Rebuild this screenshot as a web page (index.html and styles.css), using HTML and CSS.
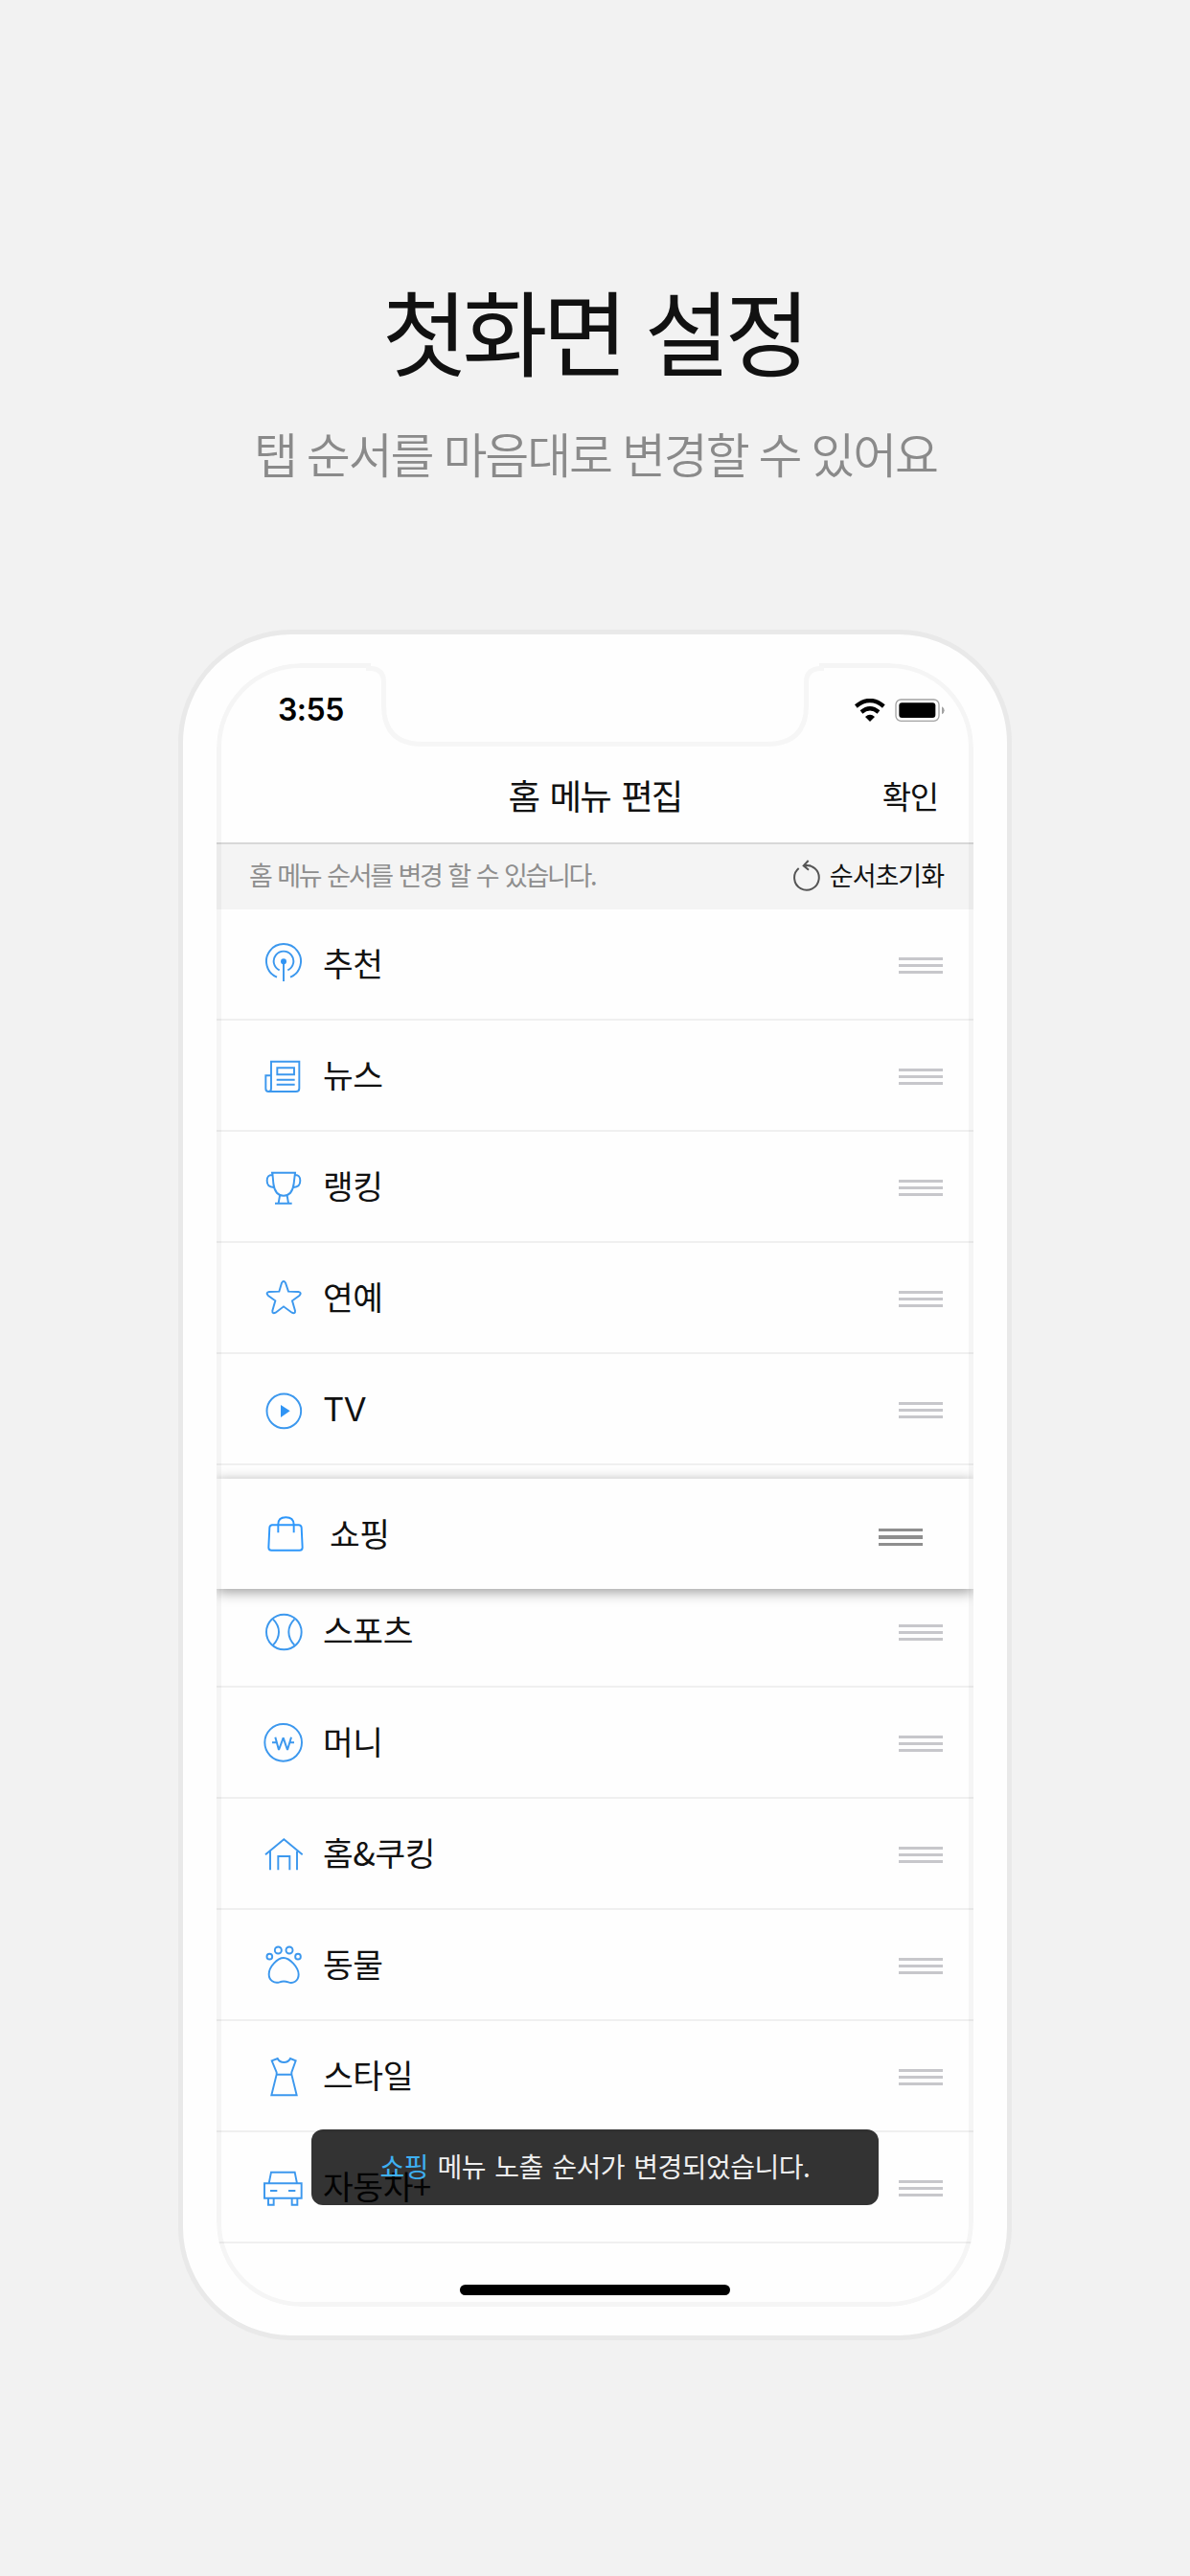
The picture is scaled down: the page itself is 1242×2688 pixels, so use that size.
FILE: index.html
```html
<!DOCTYPE html>
<html lang="ko">
<head>
<meta charset="utf-8">
<title>첫화면 설정</title>
<link rel="stylesheet" href="styles.css">
</head>
<body>
<main class="page">
  <h1 class="headline">첫화면 설정</h1>
  <p class="subhead">탭 순서를 마음대로 변경할 수 있어요</p>

  <section class="phone">
    <div class="screen">
      <div class="status">
        <span class="clock">3:55</span>
        <span class="status-icons">
          <svg class="wifi" viewBox="815 264 96 72">
            <path d="M819 288Q863 252 906 288M836 306Q863 284 890 306" fill="none" stroke="#000" stroke-width="13"/>
            <path d="M848 321Q863 307 878 321L863 336Z"/>
          </svg>
          <svg class="battery" viewBox="942 264 156 72">
            <rect x="945" y="267" width="135" height="67" rx="16" fill="none" stroke="#a2a2a2" stroke-width="4"/>
            <rect x="955" y="277" width="114" height="47" rx="9"/>
            <path d="M1089 289Q1097 293 1097 301T1089 313Z" fill="#a2a2a2"/>
          </svg>
        </span>
      </div>
      <header class="nav">
        <h2 class="nav-title">홈 메뉴 편집</h2>
        <span class="nav-done">확인</span>
      </header>
      <div class="guide">
        <span class="guide-text">홈 메뉴 순서를 변경 할 수 있습니다.</span>
        <span class="reset">
          <svg class="reset-icon" viewBox="621 771 87 99" fill="none" stroke="#555" stroke-width="6">
            <path d="M638 798A38.500 38.500 0 1 0 654 790L676 790M668 774L653 790L669 803"/>
          </svg>
          <span class="reset-text">순서초기화</span>
        </span>
      </div>

      <ul class="menu">
        <li class="row">
          <svg class="icon" viewBox="162 132 132 132">
            <path d="M207 239A54 54 0 1 1 249 239M215 217A31 31 0 1 1 241 217M228 190V252"/>
            <circle class="solid" cx="228" cy="190" r="9"/>
          </svg>
          <span class="label">추천</span><i class="grip"></i>
        </li>
        <li class="row">
          <svg class="icon" viewBox="162 480 132 132">
            <path d="M189 547V503H277V587Q277 597 267 597H181Q172 597 172 587V547H189V587Q189 597 181 597M208 523H261V544H208ZM206 560H263M206 575H263"/>
          </svg>
          <span class="label">뉴스</span><i class="grip"></i>
        </li>
        <li class="row">
          <svg class="icon" viewBox="162 138 132 132">
            <path d="M189 161H267M193 161L196 195Q201 233 228 233T260 195L264 161M193 168Q176 167 176 186Q176 206 197 207M263 168Q280 167 280 186Q280 206 259 207M216 233L212 256M239 233L243 256M201 257H254"/>
          </svg>
          <span class="label">랭킹</span><i class="grip"></i>
        </li>
        <li class="row">
          <svg class="icon" viewBox="162 486 132 132">
            <path d="M222 506Q228 496 234 506L243 533L274 534Q286 536 278 545L255 562L264 593Q265 604 254 599L228 580L203 599Q192 604 193 593L202 562L179 545Q171 536 183 534L214 533Z"/>
          </svg>
          <span class="label">연예</span><i class="grip"></i>
        </li>
        <li class="row">
          <svg class="icon" viewBox="162 834 132 132">
            <circle cx="229" cy="907" r="53.500"/>
            <path class="solid" d="M219 888L248 907L219 927Z"/>
          </svg>
          <span class="label latin">TV</span><i class="grip"></i>
        </li>
        <li class="slot">
          <div class="row lifted">
            <svg class="icon" viewBox="162 235.500 132 132">
              <path d="M190 272H275Q283 272 284 280L287 343Q287 352 278 352H190Q181 352 181 343L184 280Q185 272 193 272M211 296V270Q211 248 235 248T260 270V296"/>
            </svg>
            <span class="label">쇼핑</span><i class="grip"></i>
          </div>
        </li>
        <li class="row">
          <svg class="icon" viewBox="162 540 132 132">
            <circle cx="229" cy="609" r="55"/>
            <path d="M195 569Q213 587 213 609T195 650M262 569Q244 587 244 609T262 650"/>
          </svg>
          <span class="label">스포츠</span><i class="grip"></i>
        </li>
        <li class="row">
          <svg class="icon" viewBox="162 888 132 132">
            <circle cx="227" cy="955" r="58"/>
            <path class="won" d="M202 938L213 978L227 940L240 978L252 938M192 955H208M246 955H261"/>
          </svg>
          <span class="label">머니</span><i class="grip"></i>
        </li>
        <li class="row">
          <svg class="icon" viewBox="162 216 132 132">
            <path d="M171 286L229 238L287 286M186 275V334M270 275V334M211 334V291H247V334"/>
          </svg>
          <span class="label">홈&amp;쿠킹</span><i class="grip"></i>
        </li>
        <li class="row">
          <svg class="icon" viewBox="162 564 132 132">
            <circle cx="211" cy="585" r="10.500"/><circle cx="246" cy="585" r="10.500"/>
            <circle cx="184" cy="605" r="8.500"/><circle cx="273" cy="605" r="8.500"/>
            <path d="M228 609C247 609 275 639 275 661C275 683 256 690 243 685Q228 680 215 685C199 690 182 680 182 660C182 637 209 609 228 609Z"/>
          </svg>
          <span class="label">동물</span><i class="grip"></i>
        </li>
        <li class="row">
          <svg class="icon" viewBox="162 912 132 132">
            <path d="M191 931L209 924Q215 936 229 936T249 924L266 931L253 967V974L269 1039H190L206 974V967ZM206 974H253"/>
          </svg>
          <span class="label">스타일</span><i class="grip"></i>
        </li>
        <li class="row">
          <svg class="icon" viewBox="282 240 132 132">
            <path d="M302 295L309 260H383L390 295M288 295H404V341H288ZM306 318H328M363 318H385M300 341V362H317V341M374 341V362H391V341"/>
          </svg>
          <span class="label">자동차+</span><i class="grip"></i>
        </li>
      </ul>

      <div class="toast"><p class="toast-text"><b class="toast-name">쇼핑</b> 메뉴 노출 순서가 변경되었습니다.</p></div>
      <div class="home-bar"></div>
      <svg class="notch" viewBox="382 692 480 88">
        <rect x="387" y="690" width="468" height="9" fill="#fefefe"/>
        <path d="M382 697.500H386Q400.500 697.500 400.500 712V736Q400.500 776.500 441 776.500H800Q841.500 776.500 841.500 736V712Q841.500 697.500 857 697.500H860" fill="#fefefe" stroke="#f6f6f6" stroke-width="5"/>
      </svg>
    </div>
  </section>
</main>
</body>
</html>
```
FILE: styles.css
```css
* { box-sizing: border-box; margin: 0; padding: 0; }

body {
  background: #f2f2f2;
  color: #111;
  font-family: "Noto Sans CJK KR", sans-serif;
}

.page {
  display: flex;
  flex-direction: column;
  align-items: center;
  height: 2688px;
  padding-top: 283px;
}

.headline {
  padding-right: 3px;
  font-size: 97px;
  font-weight: 400;
  line-height: 120px;
  letter-spacing: -5.6px;
  word-spacing: 1.5px;
}

.subhead {
  margin-top: 34px;
  padding-left: 1px;
  color: #8a8a8a;
  font-family: "Noto Sans CJK KR DemiLight", "Noto Sans CJK KR", sans-serif;
  font-size: 50px;
  font-weight: 350;
  line-height: 70px;
  letter-spacing: -2.1px;
  word-spacing: -1px;
}

.phone {
  width: 870px;
  height: 1785px;
  margin-top: 150px;
  padding: 30px 35px;
  background: #fefefe;
  border: 5px solid #e9e9e9;
  border-radius: 118px;
}

.screen {
  position: relative;
  width: 790px;
  height: 1715px;
  overflow: hidden;
  border-radius: 88px;
}

.screen::after {
  content: "";
  position: absolute;
  inset: 0;
  z-index: 2;
  border: 5px solid rgba(0, 0, 0, 0.035);
  border-radius: 88px;
}

.status {
  display: flex;
  justify-content: space-between;
  align-items: center;
  height: 85px;
  padding: 12px 30px 0 64px;
}

.clock {
  color: #000;
  font: 600 32px "Inter", sans-serif;
  letter-spacing: -0.5px;
}

.status-icons { display: flex; gap: 10px; }
.wifi { width: 32px; height: 24px; }
.battery { width: 52px; height: 24px; }

.nav {
  display: grid;
  grid-template-columns: 1fr auto 1fr;
  align-items: center;
  height: 104px;
  padding: 3px 37px 0;
  border-bottom: 2px solid #d8d8d8;
}

.nav-title {
  grid-column: 2;
  font-size: 36.5px;
  font-weight: 400;
  line-height: 50px;
  letter-spacing: -1.9px;
  word-spacing: 3px;
}

.nav-done {
  justify-self: end;
  font-size: 33px;
  line-height: 50px;
  letter-spacing: -1.2px;
}

.guide {
  display: flex;
  justify-content: space-between;
  align-items: center;
  height: 68px;
  padding: 0 31px 4px 34px;
  background: #f4f4f4;
  font-size: 27px;
  line-height: 40px;
}

.guide-text {
  color: #8e8e8e;
  letter-spacing: -2.3px;
  word-spacing: 1.5px;
}

.reset { display: flex; align-items: center; gap: 9px; }
.reset-icon { width: 29px; height: 33px; }
.reset-text { letter-spacing: -1px; }

.menu { list-style: none; }

.row {
  display: flex;
  align-items: center;
  height: 116px;
  padding: 0 32px 0 48px;
  background: #fefefe;
  border-bottom: 2px solid #f0f0f0;
}

.icon {
  width: 44px;
  height: 44px;
  fill: none;
  stroke: #3c98ee;
  stroke-width: 5.8;
}

.icon .solid { fill: #3094f4; stroke: none; }
.icon .won { stroke-width: 6; stroke-linejoin: bevel; }

.label {
  flex: 1;
  margin: -4px 0 0 19px;
  font-size: 34.5px;
  line-height: 50px;
  letter-spacing: -0.4px;
}

.label.latin { margin-top: 2px; font-family: "Inter", sans-serif; }

.grip {
  width: 46px;
  height: 17px;
  margin-top: 2px;
  background: linear-gradient(#c7c7cb 3px, transparent 3px 7px, #c7c7cb 7px 10px, transparent 10px 14px, #c7c7cb 14px);
}

.slot { position: relative; height: 116px; }

.lifted {
  position: absolute;
  top: 14px;
  left: 0;
  z-index: 1;
  width: 790px;
  height: 115px;
  padding-right: 53px;
  border: 0;
  box-shadow: 0 3px 13px rgba(0, 0, 0, 0.4);
}

.lifted .icon { stroke: #2e97fa; }
.lifted .label { margin-left: 26px; }

.lifted .grip {
  height: 18px;
  margin-top: 6px;
  background: linear-gradient(#8e8e8e 3px, transparent 3px 7px, #8e8e8e 7px 11px, transparent 11px 15px, #8e8e8e 15px);
}

.toast {
  position: absolute;
  top: 1530px;
  left: 99px;
  z-index: 2;
  display: flex;
  justify-content: center;
  align-items: center;
  width: 592px;
  height: 79px;
  padding-bottom: 3px;
  background: rgba(0, 0, 0, 0.8);
  border-radius: 12px;
}

.toast-text {
  color: #eee;
  font-size: 28px;
  line-height: 40px;
  letter-spacing: -0.5px;
  word-spacing: 2px;
}

.toast-name { color: #3eb0f2; font-weight: 400; }

.home-bar {
  position: absolute;
  bottom: 12px;
  left: 254px;
  width: 282px;
  height: 11px;
  background: #000;
  border-radius: 6px;
}

.notch {
  position: absolute;
  top: 0;
  left: 156px;
  z-index: 3;
  width: 480px;
  height: 88px;
}
```
